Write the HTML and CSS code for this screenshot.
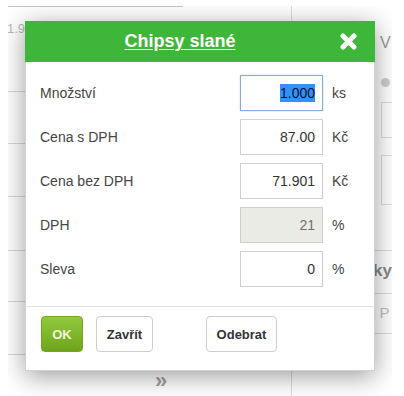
FILE: index.html
```html
<!DOCTYPE html>
<html lang="cs">
<head>
<meta charset="utf-8">
<title>Chipsy slané</title>
<link rel="stylesheet" href="styles.css">
</head>
<body>
<div class="frame">
  <div class="left">
    <div class="tabline"></div>
    <div class="lrow r1"><span class="num">1.9.</span></div>
    <div class="lrow r2"></div>
    <div class="lrow r3"></div>
    <div class="lrow r4"></div>
    <div class="lrow r5"></div>
    <div class="lrow r6"></div>
    <div class="more">&raquo;</div>
  </div>
  <div class="right">
    <div class="rv">V</div>
    <div class="rdot"></div>
    <div class="rbox b1"></div>
    <div class="rbox b2"></div>
    <div class="rline l1"></div>
    <div class="rky">ky</div>
    <div class="rline l2"></div>
    <div class="rtp">t P</div>
    <div class="rline l3"></div>
  </div>

  <div class="modal">
    <div class="m-head">
      <span class="m-title">Chipsy slané</span>
      <span class="m-close">
        <svg width="17" height="17" viewBox="0 0 17 17"><path d="M3 3 L14 14 M14 3 L3 14" stroke="#fff" stroke-width="5" stroke-linecap="round"/></svg>
      </span>
    </div>
    <div class="m-body">
      <div class="frow"><span class="flabel">Množství</span><div class="field focus"><span class="sel">1.000</span></div><span class="unit">ks</span></div>
      <div class="frow"><span class="flabel">Cena s DPH</span><div class="field">87.00</div><span class="unit">Kč</span></div>
      <div class="frow"><span class="flabel">Cena bez DPH</span><div class="field">71.901</div><span class="unit">Kč</span></div>
      <div class="frow"><span class="flabel">DPH</span><div class="field disabled">21</div><span class="unit">%</span></div>
      <div class="frow"><span class="flabel">Sleva</span><div class="field">0</div><span class="unit">%</span></div>
    </div>
    <div class="m-foot">
      <button class="btn ok">OK</button>
      <button class="btn close">Zavřít</button>
      <button class="btn remove">Odebrat</button>
    </div>
  </div>
</div>
</body>
</html>
```

FILE: styles.css
```css
body {
  margin: 0;
  background: #fff;
  font-family: "Liberation Sans", Arial, sans-serif;
}

.frame {
  position: relative;
  margin: 6px 0 0 8px;
  width: 384px;
  height: 390px;
  overflow: hidden;
  display: flex;
  background: #fff;
}

/* left page column */
.left {
  width: 287px;
  border-right: 1px solid #dcdcdc;
  display: flex;
  flex-direction: column;
}
.tabline {
  width: 175px;
  border-top: 1px solid #c4c4c4;
}
.lrow {
  box-sizing: border-box;
  border-bottom: 1px solid #d8d8d8;
}
.r1 { height: 85px; }
.r2 { height: 52px; }
.r3 { height: 53px; }
.r4 { height: 54px; }
.r5 { height: 51px; }
.r6 { height: 53px; }
.num {
  display: block;
  margin: 14px 0 0 -1px;
  font-size: 13px;
  color: #b8b8b8;
}
.more {
  padding-left: 147px;
  margin-top: 15px;
  font-size: 22px;
  font-weight: bold;
  line-height: 1;
  color: #a0a0a0;
}

/* right page column */
.right {
  flex: 1;
  display: flex;
  flex-direction: column;
}
.rv {
  margin: 29px 0 0 88px;
  font-size: 16px;
  line-height: 16px;
  color: #9a9a9a;
}
.rdot {
  margin: 27px 0 0 89px;
  width: 9px;
  height: 9px;
  border-radius: 50%;
  background: #cfcfcf;
}
.rbox {
  margin-left: 89px;
  border: 1px solid #dcdcdc;
  border-right: none;
  box-sizing: border-box;
}
.b1 { margin-top: 15px; height: 36px; }
.b2 { margin-top: 17px; height: 50px; }
.rline {
  margin-left: 79px;
  border-top: 1px solid #dcdcdc;
}
.l1 { margin-top: 45px; }
.rky {
  margin: 10px 0 0 81px;
  font-size: 17px;
  line-height: 20px;
  font-weight: bold;
  color: #888;
}
.l2 { margin-top: 12px; }
.rtp {
  margin: 10px 0 0 79px;
  font-size: 15px;
  line-height: 18px;
  color: #c0c0c0;
}
.l3 { margin-top: 11px; }

/* modal */
.modal {
  position: absolute;
  left: 17px;
  top: 15px;
  width: 350px;
  height: 350px;
  background: #fff;
  border: 1px solid rgba(0, 0, 0, 0.18);
  box-sizing: border-box;
  box-shadow: 0 5px 24px rgba(0, 0, 0, 0.4);
  display: flex;
  flex-direction: column;
}
.m-head {
  height: 41px;
  margin: -1px -1px 0 -1px;
  background: #3eb63a;
  display: flex;
  align-items: center;
}
.m-title {
  flex: 1;
  text-align: center;
  color: #fff;
  font-size: 18px;
  font-weight: bold;
  text-decoration: underline;
  text-underline-offset: 2px;
}
.m-close {
  display: flex;
  margin: 0 18px 0 5px;
  width: 17px;
  height: 17px;
}

.m-body {
  padding: 13px 16px 19px 14px;
  display: flex;
  flex-direction: column;
  gap: 8px;
  border-bottom: 1px solid #e3e3e3;
}
.frow {
  display: flex;
  align-items: center;
  height: 36px;
}
.flabel {
  flex: 1;
  font-size: 14px;
  color: #454545;
}
.field {
  box-sizing: border-box;
  width: 83px;
  height: 36px;
  border: 1px solid #cfcfcf;
  padding-right: 7px;
  text-align: right;
  font-size: 14px;
  line-height: 34px;
  color: #333;
  background: #fff;
}
.field.focus {
  border-color: #86acdc;
  box-shadow: 0 0 2px rgba(90, 140, 210, 0.35);
}
.sel {
  background: #3390ff;
  color: #0a1428;
  padding: 1px 0;
}
.field.disabled {
  background: #ebebe5;
  color: #707070;
}
.unit {
  margin-left: 9px;
  width: 26px;
  font-size: 14px;
  color: #454545;
}

.m-foot {
  padding: 9px 0 0 15px;
  display: flex;
  align-items: flex-start;
}
.btn {
  height: 36px;
  padding: 0;
  border: 1px solid #cdcdcd;
  border-radius: 4px;
  background: #fff;
  font-family: "Liberation Sans", Arial, sans-serif;
  font-size: 13px;
  font-weight: bold;
  color: #333;
  margin-right: 13px;
}
.btn.ok {
  width: 42px;
  border-color: #74a81c;
  background: linear-gradient(#93c83f, #6ea41a);
  color: #eef7dc;
}
.btn.close {
  width: 57px;
}
.btn.remove {
  width: 71px;
  margin-left: 40px;
}
```
